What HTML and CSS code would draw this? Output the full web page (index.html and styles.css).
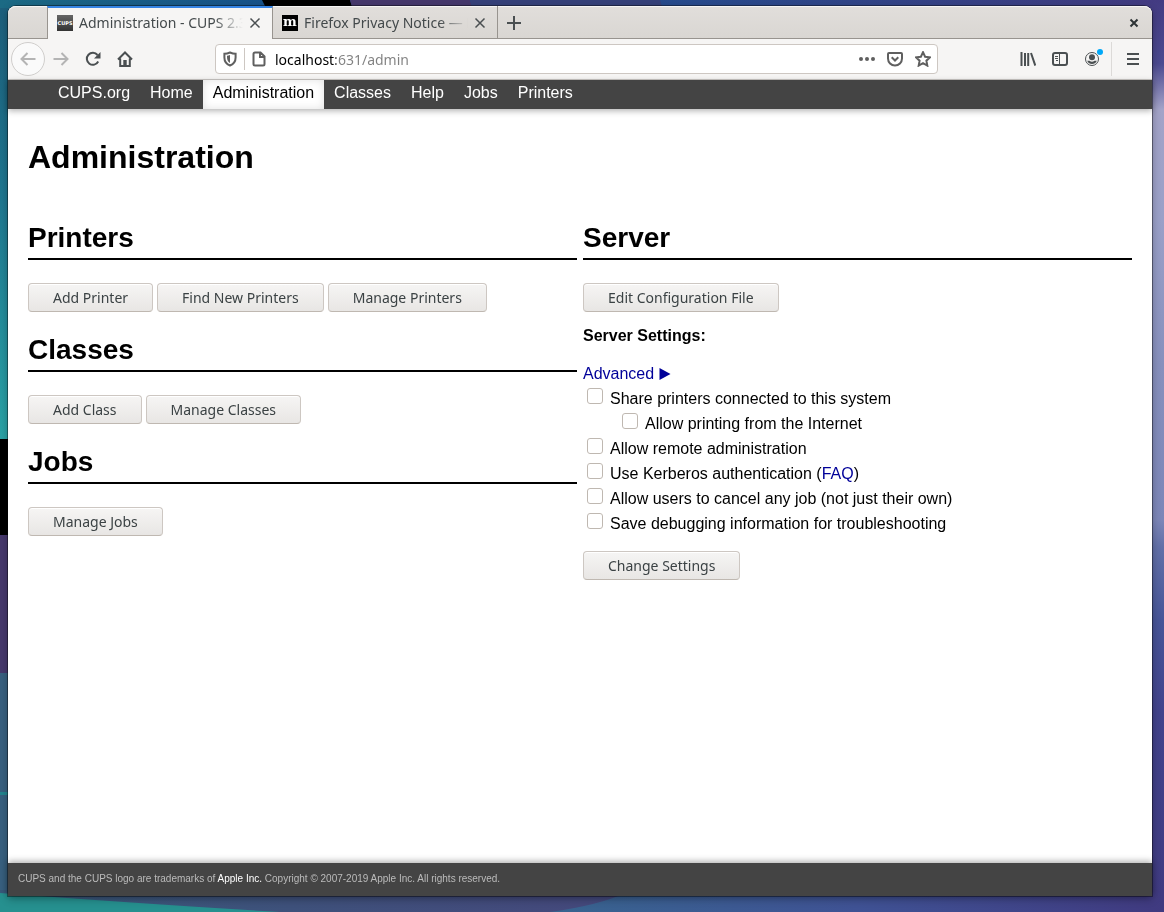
FILE: index.html
```html
<!DOCTYPE html>
<html lang="en">
<head>
    <meta charset="UTF-8">
    <title>Administration - CUPS 2.3.1</title>
    <link rel="stylesheet" href="styles.css">
</head>
<body>
    <!-- desktop wallpaper -->
    <svg class="wallpaper" viewBox="0 0 1164 912" preserveAspectRatio="none" aria-hidden="true">
        <defs>
            <linearGradient id="top" x1="0" x2="1" y1="0" y2="0">
                <stop offset="0" stop-color="#1c6a84"/>
                <stop offset=".25" stop-color="#17508a"/>
                <stop offset=".6" stop-color="#284a8c"/>
                <stop offset="1" stop-color="#413a80"/>
            </linearGradient>
            <linearGradient id="teal" x1="0" x2="0" y1="0" y2="1">
                <stop offset="0" stop-color="#1d5f7c"/>
                <stop offset=".45" stop-color="#1f7891"/>
                <stop offset="1" stop-color="#2aa3a6"/>
            </linearGradient>
            <linearGradient id="right" x1="0" x2="0" y1="0" y2="1">
                <stop offset="0" stop-color="#433b82"/>
                <stop offset=".07" stop-color="#4c4a90"/>
                <stop offset=".12" stop-color="#a3a3c8"/>
                <stop offset=".24" stop-color="#9aa0c8"/>
                <stop offset=".4" stop-color="#8790bd"/>
                <stop offset=".57" stop-color="#7c86b8"/>
                <stop offset=".6" stop-color="#6270a8"/>
                <stop offset=".68" stop-color="#475598"/>
                <stop offset=".78" stop-color="#42438c"/>
                <stop offset="1" stop-color="#3f3a80"/>
            </linearGradient>
            <linearGradient id="bottom" x1="0" x2="1" y1="0" y2="0">
                <stop offset="0" stop-color="#38597a"/>
                <stop offset=".5" stop-color="#44497c"/>
                <stop offset="1" stop-color="#403a80"/>
            </linearGradient>
            <linearGradient id="wave" x1="0" x2="1" y1="0" y2="0">
                <stop offset="0" stop-color="#38648f"/>
                <stop offset=".5" stop-color="#3f5294"/>
                <stop offset="1" stop-color="#403a80"/>
            </linearGradient>
        </defs>
        <rect width="1164" height="20" fill="url(#top)"/>
        <path d="M262 0H350L356 20H272z" fill="#000"/>
        <path d="M350 0H470L476 20H356z" fill="#46386c"/>
        <path d="M470 0H660L666 20H476z" fill="#36417a"/>
        <rect y="8" width="20" height="432" fill="url(#teal)"/>
        <rect y="439" width="20" height="97" fill="#000"/>
        <rect y="535" width="20" height="139" fill="#46386c"/>
        <rect y="673" width="20" height="239" fill="#38607f"/>
        <rect y="792" width="20" height="3" fill="#23848e"/>
        <rect x="1140" width="24" height="912" fill="url(#right)"/>
        <rect y="890" width="1164" height="22" fill="url(#bottom)"/>
        <path d="M0 893Q130 903 280 912H0z" fill="#26908f"/>
        <path d="M550 912Q600 905 625 893H1164V912z" fill="url(#wave)"/>
    </svg>

    <div class="window">
        <div class="tabs">
            <div class="tab tab-active">
                <span class="favicon favicon-cups">CUPS</span>
                <span class="tab-title">Administration - CUPS 2.3.1</span>
                <button class="tab-close" aria-label="Close tab">
                    <svg width="12" height="12" viewBox="0 0 12 12"><path d="M1.500 1.500l9 9M10.500 1.500l-9 9"/></svg>
                </button>
            </div>
            <div class="tab">
                <span class="favicon favicon-moz">m</span>
                <span class="tab-title">Firefox Privacy Notice — Mozilla</span>
                <button class="tab-close" aria-label="Close tab">
                    <svg width="12" height="12" viewBox="0 0 12 12"><path d="M1.500 1.500l9 9M10.500 1.500l-9 9"/></svg>
                </button>
            </div>
            <button class="new-tab" aria-label="New tab">
                <svg width="14" height="14" viewBox="0 0 14 14"><path d="M7 0v14M0 7h14"/></svg>
            </button>
            <button class="window-close" aria-label="Close window">
                <svg width="10" height="10" viewBox="0 0 10 10"><path d="M1.500 1.500l7 7M8.500 1.500l-7 7"/></svg>
            </button>
        </div>

        <div class="toolbar">
            <button class="tool tool-back" aria-label="Back">
                <svg width="16" height="16" viewBox="0 0 16 16"><path d="M15.500 8H1.500M7.500 2L1.500 8l6 6"/></svg>
            </button>
            <button class="tool tool-off" aria-label="Forward">
                <svg width="16" height="16" viewBox="0 0 16 16"><path d="M.5 8h14M8.500 2l6 6-6 6"/></svg>
            </button>
            <button class="tool" aria-label="Reload">
                <svg width="16" height="16" viewBox="0 0 16 16"><path d="M13.200 10.500A6 6 0 1 1 12.500 4"/><path class="fill" d="M15.500 1v6.500H9z"/></svg>
            </button>
            <button class="tool" aria-label="Home">
                <svg width="16" height="16" viewBox="0 0 16 16"><path d="M1 8.500L8 1.500l7 7M3.200 7.500v7.400h9.600V7.500"/><path class="fill" d="M6.300 9h3.400v5.500H6.300z"/></svg>
            </button>

            <div class="urlbar">
                <svg class="shield" width="16" height="16" viewBox="0 0 16 16"><path d="M8 1.500C6 2.400 4.200 2.800 2.400 2.800v3.700c0 4 2.200 6.700 5.600 8 3.400-1.300 5.600-4 5.600-8V2.800C11.800 2.800 10 2.400 8 1.500z"/><path class="fill" d="M8 4v8c-2-1-3-3-3-6V4.800C6 4.700 7 4.400 8 4z"/></svg>
                <span class="urlbar-line"></span>
                <svg class="page-icon" width="16" height="16" viewBox="0 0 16 16"><path d="M4 1.500h5.500l4 4v7.500a1.500 1.500 0 0 1-1.500 1.500H4a1.500 1.500 0 0 1-1.500-1.500V3A1.500 1.500 0 0 1 4 1.500zM9 1.500V6h4.500"/></svg>
                <input class="url" type="text" aria-label="Address" value="localhost:631/admin">
                <button class="url-action" aria-label="Page actions">
                    <svg width="16" height="16" viewBox="0 0 16 16"><g class="fill"><circle cx="2" cy="8" r="2"/><circle cx="8" cy="8" r="2"/><circle cx="14" cy="8" r="2"/></g></svg>
                </button>
                <button class="url-action" aria-label="Save to Pocket">
                    <svg width="16" height="16" viewBox="0 0 16 16"><path d="M2 2h12a1 1 0 0 1 1 1v4.500a7 7 0 0 1-14 0V3a1 1 0 0 1 1-1z"/><path d="M4.700 6.300L8 9.500l3.300-3.200"/></svg>
                </button>
                <button class="url-action" aria-label="Bookmark this page">
                    <svg width="16" height="16" viewBox="0 0 16 16"><path d="M8 1.200l2.100 4.500 4.900.6-3.600 3.400.9 4.900L8 12.200l-4.300 2.400.9-4.900L1 6.300l4.900-.6z"/></svg>
                </button>
            </div>

            <button class="tool" aria-label="Library">
                <svg width="16" height="16" viewBox="0 0 16 16"><path d="M1.500 1v14M5 2v13M8.200 2v13M11 2l4.300 12.600"/></svg>
            </button>
            <button class="tool" aria-label="Sidebars">
                <svg width="16" height="16" viewBox="0 0 16 16"><rect x="1" y="2" width="14" height="12" rx="2"/><path class="thin" d="M7.500 2v12M3 5.500h3M3 7.500h3M4 9.500h2"/></svg>
            </button>
            <button class="tool tool-account" aria-label="Account">
                <svg width="16" height="16" viewBox="0 0 16 16"><circle class="thin" cx="8" cy="8" r="6.500"/><circle class="fill" cx="8" cy="6.200" r="3"/><path class="fill" d="M3.200 9.800h2.300a4 4 0 0 0 5 0h2.300A5.300 5.300 0 0 1 8 13a5.300 5.300 0 0 1-4.800-3.200z"/></svg>
                <span class="dot"></span>
            </button>
            <span class="toolbar-line"></span>
            <button class="tool tool-menu" aria-label="Open menu">
                <svg width="14" height="16" viewBox="0 0 14 16"><path d="M2 3h12M2 8h12M2 13h12"/></svg>
            </button>
        </div>

        <nav class="header">
            <a href="#">CUPS.org</a>
            <a href="#">Home</a>
            <a class="active" href="#">Administration</a>
            <a href="#">Classes</a>
            <a href="#">Help</a>
            <a href="#">Jobs</a>
            <a href="#">Printers</a>
        </nav>

        <main class="body">
            <h1>Administration</h1>
            <div class="row">
                <div class="half">
                    <h2>Printers</h2>
                    <div class="buttons">
                        <button class="btn">Add Printer</button>
                        <button class="btn">Find New Printers</button>
                        <button class="btn">Manage Printers</button>
                    </div>
                    <h2>Classes</h2>
                    <div class="buttons">
                        <button class="btn">Add Class</button>
                        <button class="btn">Manage Classes</button>
                    </div>
                    <h2>Jobs</h2>
                    <div class="buttons">
                        <button class="btn">Manage Jobs</button>
                    </div>
                </div>
                <form class="half">
                    <h2>Server</h2>
                    <div class="buttons">
                        <button class="btn" type="button">Edit Configuration File</button>
                    </div>
                    <p class="settings-title">Server Settings:</p>
                    <p class="advanced"><a href="#">Advanced <svg width="12" height="12" viewBox="0 0 12 12"><path d="M.5 0L11.500 6 .5 12z"/></svg></a></p>
                    <div class="option">
                        <input type="checkbox" id="share">
                        <label for="share">Share printers connected to this system</label>
                    </div>
                    <div class="option option-sub">
                        <input type="checkbox" id="internet">
                        <label for="internet">Allow printing from the Internet</label>
                    </div>
                    <div class="option">
                        <input type="checkbox" id="remote">
                        <label for="remote">Allow remote administration</label>
                    </div>
                    <div class="option">
                        <input type="checkbox" id="kerberos">
                        <label for="kerberos">Use Kerberos authentication (<a href="#">FAQ</a>)</label>
                    </div>
                    <div class="option">
                        <input type="checkbox" id="cancel">
                        <label for="cancel">Allow users to cancel any job (not just their own)</label>
                    </div>
                    <div class="option">
                        <input type="checkbox" id="debug">
                        <label for="debug">Save debugging information for troubleshooting</label>
                    </div>
                    <div class="buttons buttons-save">
                        <button class="btn" type="button">Change Settings</button>
                    </div>
                </form>
            </div>
        </main>

        <footer class="footer">CUPS and the CUPS logo are trademarks of <a href="#">Apple Inc.</a> Copyright © 2007-2019 Apple Inc. All rights reserved.</footer>
    </div>
</body>
</html>
```
FILE: styles.css
```css
* {
    box-sizing: border-box;
}
body {
    margin: 0;
    padding: 6px 12px 16px 8px;
    min-height: 100vh;
    display: flex;
    font-family: "Liberation Sans", Arial, sans-serif;
    font-size: 16px;
    color: #000;
}
button {
    background: none;
    border: 0;
    padding: 0;
    font-family: "Noto Sans", sans-serif;
}
svg {
    fill: none;
    stroke: #4a4f51;
    stroke-width: 2;
}
.fill {
    fill: #4a4f51;
    stroke: none;
}
.thin {
    stroke-width: 1;
}
.wallpaper {
    position: fixed;
    top: 0;
    left: 0;
    width: 100%;
    height: 100%;
    z-index: -1;
    stroke: none;
}
.window {
    flex: 1;
    display: flex;
    flex-direction: column;
    background: #fff;
    border-radius: 8px 8px 0 0;
    box-shadow: 0 0 0 1px rgba(0, 0, 0, 0.4), 0 3px 9px rgba(0, 0, 0, 0.3);
}

/* browser tabs */
.tabs {
    display: flex;
    height: 33px;
    padding-left: 39px;
    background: linear-gradient(#e1dedb, #d9d6d2);
    border-radius: 8px 8px 0 0;
    box-shadow: inset 0 1px #f6f5f4, inset 0 -1px #98948f;
}
.tab {
    display: flex;
    align-items: center;
    width: 225px;
    padding: 0 11px 0 9px;
    border-right: 1px solid #98948f;
}
.tab-active {
    background: #f6f5f4;
    border-top: 2px solid #3584e4;
    border-left: 1px solid #98948f;
    padding-bottom: 2px;
    width: 226px;
}
.favicon {
    width: 16px;
    height: 16px;
    color: #fff;
    text-align: center;
}
.favicon-cups {
    background: linear-gradient(#666, #333);
    font: bold 5px/16px "DejaVu Sans", sans-serif;
}
.favicon-moz {
    background: #000;
    font: bold 13px/13px "DejaVu Serif", serif;
}
.tab-title {
    flex: 1;
    margin-left: 6px;
    overflow: hidden;
    white-space: nowrap;
    font-family: "Noto Sans", sans-serif;
    font-size: 14px;
    color: #43494b;
    mask-image: linear-gradient(to left, transparent 3px, #000 32px);
}
.tab-close {
    display: flex;
    margin-left: 3px;
}
.tab-close svg {
    stroke-width: 1.5;
}
.new-tab {
    display: flex;
    align-items: center;
    margin-left: 9px;
}
.window-close {
    display: flex;
    align-items: center;
    margin-left: auto;
    margin-right: 13px;
}
.window-close svg {
    stroke: #2e3436;
}

/* browser toolbar */
.toolbar {
    display: flex;
    align-items: center;
    height: 41px;
    padding-left: 3px;
    background: #f6f5f4;
    border-bottom: 1px solid #c9c6c3;
}
.tool {
    display: flex;
    align-items: center;
    justify-content: center;
    width: 32px;
    height: 34px;
}
.tool-back {
    width: 34px;
    border: 1px solid #d0cecc;
    border-radius: 50%;
    background: #fafafa;
}
.tool-back svg, .tool-off svg {
    stroke: #b4b4b4;
}
.tool-account {
    position: relative;
}
.dot {
    position: absolute;
    top: 7px;
    right: 5px;
    width: 6px;
    height: 6px;
    border-radius: 50%;
    background: #00a8f8;
}
.toolbar-line {
    width: 1px;
    height: 34px;
    margin-left: 3px;
    background: #dcdad8;
}
.tool-menu {
    width: 40px;
}
.urlbar {
    flex: 1;
    display: flex;
    align-items: center;
    height: 30px;
    margin: 0 74px;
    padding-left: 6px;
    background: #fff;
    border: 1px solid #cdc7c2;
    border-radius: 4px;
}
.urlbar svg {
    stroke: #5f5f5f;
}
.urlbar .fill {
    fill: #5f5f5f;
    stroke: none;
}
.urlbar-line {
    width: 1px;
    height: 22px;
    margin: 0 6px;
    background: #cdc7c2;
}
.page-icon {
    margin-right: 8px;
}
/* host in black, the rest of the address in grey */
.url {
    flex: 1;
    border: 0;
    padding: 0;
    font-family: "Noto Sans", sans-serif;
    font-size: 14px;
    color: transparent;
    background: linear-gradient(to right, #000 61px, #808080 61px);
    background-clip: text;
}
.url-action {
    display: flex;
    justify-content: center;
    width: 28px;
}

/* CUPS page */
a {
    color: #009;
    text-decoration: none;
}
.header {
    display: flex;
    height: 29px;
    padding-left: 40px;
    background: #444;
    box-shadow: 0 2px 6px rgba(0, 0, 0, 0.3);
}
.header a {
    padding: 0 10px;
    line-height: 25px;
    color: #fff;
}
.header .active {
    background: #fff;
    color: #000;
    box-shadow: inset 0 0 8px rgba(0, 0, 0, 0.12);
}
.body {
    flex: 1;
    padding: 30px 20px 20px;
}
h1 {
    margin: 0 0 46px;
    font-size: 32px;
    line-height: 36px;
}
h2 {
    margin: 0 0 23px;
    padding-bottom: 3px;
    border-bottom: 2px solid #000;
    font-size: 28px;
    line-height: 34px;
}
.row {
    display: grid;
    grid-template-columns: 1fr 1fr;
    gap: 6px;
}
.buttons {
    display: flex;
    gap: 4px;
    margin-bottom: 21px;
}
.btn {
    height: 29px;
    padding: 0 24px;
    border: 1px solid #cdc7c2;
    border-bottom-color: #bfb8b1;
    border-radius: 4px;
    background: linear-gradient(#f6f5f4, #e8e6e4);
    box-shadow: inset 0 1px #fff;
    font-size: 14px;
    color: #3b4244;
}
.settings-title {
    margin: -7px 0 18px;
    line-height: 20px;
    font-weight: bold;
}
.advanced {
    margin: 0 0 2px;
    line-height: 20px;
}
.advanced svg {
    fill: #009;
    stroke: none;
    vertical-align: -1px;
}
.option {
    display: flex;
    line-height: 25px;
}
.option input {
    appearance: none;
    width: 16px;
    height: 16px;
    margin: 2px 7px 0 4px;
    border: 1px solid #bfb8b1;
    border-radius: 3px;
    background: #fff;
}
.option-sub {
    padding-left: 35px;
}
.buttons-save {
    margin-top: 15px;
}
.footer {
    padding: 9px 10px 11px;
    background: #444;
    box-shadow: 0 -2px 6px rgba(0, 0, 0, 0.3);
    font-size: 10px;
    line-height: 13px;
    color: #bbb;
}
.footer a {
    color: #fff;
}
```
